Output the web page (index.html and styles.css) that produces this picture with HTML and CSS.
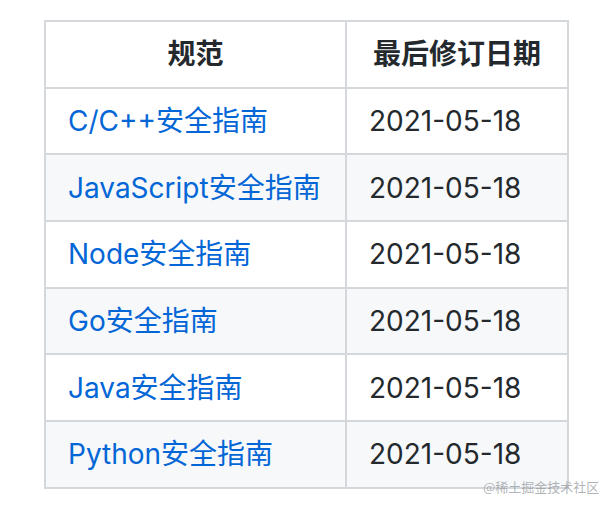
FILE: index.html
```html
<!DOCTYPE html>
<html lang="zh-CN">
<head>
<meta charset="utf-8">
<link rel="stylesheet" href="styles.css">
</head>
<body>
<div class="page">
  <table class="spec">
    <colgroup>
      <col class="c1">
      <col class="c2">
    </colgroup>
    <thead>
      <tr><th>规范</th><th>最后修订日期</th></tr>
    </thead>
    <tbody>
      <tr><td><a href="#">C/C++安全指南</a></td><td>2021-05-18</td></tr>
      <tr><td><a href="#">JavaScript安全指南</a></td><td>2021-05-18</td></tr>
      <tr><td><a href="#">Node安全指南</a></td><td>2021-05-18</td></tr>
      <tr><td><a href="#">Go安全指南</a></td><td>2021-05-18</td></tr>
      <tr><td><a href="#">Java安全指南</a></td><td>2021-05-18</td></tr>
      <tr><td><a href="#">Python安全指南</a></td><td>2021-05-18</td></tr>
    </tbody>
  </table>
  <div class="watermark">@稀土掘金技术社区</div>
</div>
</body>
</html>
```

FILE: styles.css
```css
html, body {
  margin: 0;
  padding: 0;
  background: #ffffff;
}
body {
  font-family: Inter, "Liberation Sans", "Noto Sans CJK SC", sans-serif;
  color: #24292e;
}
.page {
  position: relative;
  width: 614px;
  height: 508px;
  padding: 20px 0 0 44px;
  box-sizing: border-box;
}
.spec {
  border-collapse: collapse;
  table-layout: fixed;
  width: 523px;
  font-size: 28px;
  line-height: 42px;
}
.c1 { width: 301px; }
.c2 { width: 222px; }
.spec th,
.spec td {
  border: 2px solid #d4d8dc;
  padding: 11.33px 22px;
  white-space: nowrap;
  text-align: left;
}
.spec th {
  font-weight: 700;
  text-align: center;
}
.spec tbody tr:nth-child(even) {
  background: #f6f8fa;
}
.spec a {
  color: #0366d6;
  text-decoration: none;
}
.watermark {
  position: absolute;
  left: 483px;
  top: 478px;
  font-family: "Noto Sans CJK SC", sans-serif;
  font-size: 13px;
  line-height: 18px;
  color: rgba(150, 155, 160, 0.75);
}
```
